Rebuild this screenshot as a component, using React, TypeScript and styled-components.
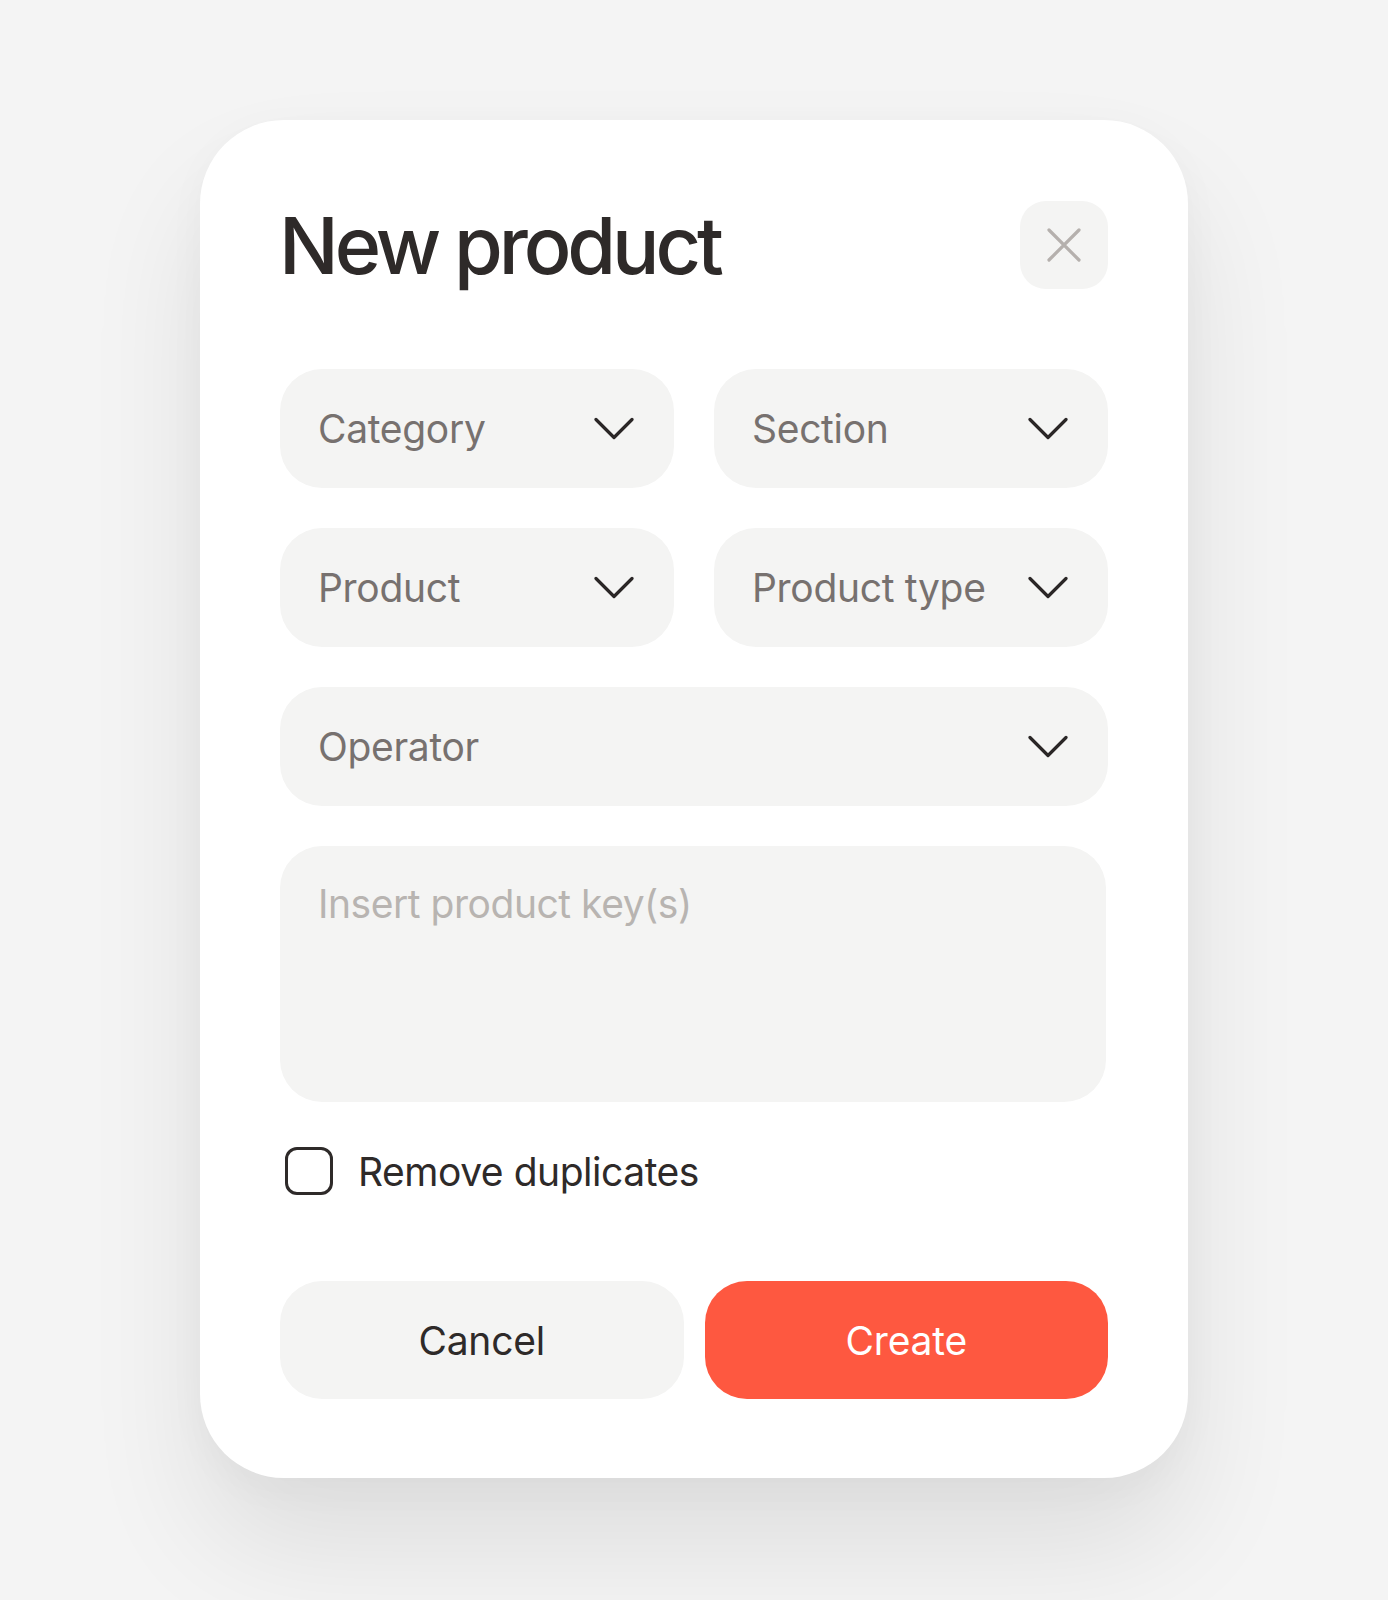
import React from "react"
import styled, { createGlobalStyle } from "styled-components"

const GlobalStyle = createGlobalStyle`
  html, body {
    margin: 0;
    padding: 0;
    background: #f4f4f4;
  }
  body {
    font-family: Inter, "Noto Sans", sans-serif;
  }
`

const Page = styled.div`
  display: flex;
  justify-content: center;
  padding: 120px 0 122px;
  min-height: 1600px;
  box-sizing: border-box;
`

const Card = styled.div`
  width: 988px;
  height: 1358px;
  box-sizing: border-box;
  background: #ffffff;
  border-radius: 84px;
  padding: 81px 80px 79px;
  display: flex;
  flex-direction: column;
  box-shadow: 0 70px 120px rgba(0, 0, 0, 0.09), 0 10px 40px rgba(0, 0, 0, 0.03);
`

const Header = styled.div`
  display: flex;
  align-items: center;
  justify-content: space-between;
  height: 88px;
  margin-bottom: 80px;
`

const Title = styled.h1`
  margin: 0 0 0 -1px;
  font-size: 79px;
  font-weight: 500;
  letter-spacing: -0.052em;
  color: #2e2a29;
  line-height: 1;
`

const CloseButton = styled.button`
  width: 88px;
  height: 88px;
  border: none;
  border-radius: 26px;
  background: #f4f4f3;
  display: flex;
  align-items: center;
  justify-content: center;
  padding: 0;
  cursor: pointer;
`

const Fields = styled.div`
  display: grid;
  grid-template-columns: 1fr 1fr;
  column-gap: 40px;
  row-gap: 40px;
`

const SelectBox = styled.div<{ $wide?: boolean }>`
  grid-column: ${({ $wide }) => ($wide ? "1 / span 2" : "auto")};
  height: 119px;
  box-sizing: border-box;
  background: #f4f4f3;
  border-radius: 42px;
  padding: 0 40px 0 38px;
  display: flex;
  align-items: center;
  justify-content: space-between;
`

const SelectLabel = styled.span`
  font-size: 39px;
  letter-spacing: -0.008em;
  color: #77716f;
`

const TextArea = styled.div`
  grid-column: 1 / span 2;
  height: 256px;
  box-sizing: border-box;
  margin-right: 2px;
  background: #f4f4f3;
  border-radius: 42px;
  padding: 34px 40px 34px 38px;
`

const Placeholder = styled.span`
  font-size: 39px;
  line-height: 48px;
  letter-spacing: -0.012em;
  color: #b8b4b1;
`

const CheckRow = styled.label`
  display: flex;
  align-items: center;
  gap: 25px;
  margin: 45px 0 0 5px;
  height: 48px;
`

const CheckBox = styled.span`
  width: 48px;
  height: 48px;
  box-sizing: border-box;
  border: 3.5px solid #2e2a29;
  border-radius: 12px;
`

const CheckLabel = styled.span`
  font-size: 39px;
  letter-spacing: -0.012em;
  color: #2e2a29;
`

const Actions = styled.div`
  display: grid;
  grid-template-columns: 1fr 1fr;
  gap: 21px;
  margin-top: 86px;
`

const ActionButton = styled.button<{ $primary?: boolean }>`
  height: 118px;
  border: none;
  border-radius: 42px;
  font-family: Inter, "Noto Sans", sans-serif;
  font-size: 39px;
  letter-spacing: -0.005em;
  background: ${({ $primary }) => ($primary ? "#fe5840" : "#f4f4f3")};
  color: ${({ $primary }) => ($primary ? "#ffffff" : "#2e2a29")};
  cursor: pointer;
`

const Chevron = () => (
  <svg width="40" height="24" viewBox="0 0 40 24" fill="none">
    <path d="M2 2.5 L20 20.5 L38 2.5" stroke="#2a2626" strokeWidth="3.2" strokeLinecap="round" strokeLinejoin="round" />
  </svg>
)

const CloseIcon = () => (
  <svg width="36" height="36" viewBox="0 0 36 36" fill="none">
    <path d="M3 3 L33 33 M33 3 L3 33" stroke="#b5b0ad" strokeWidth="3.2" strokeLinecap="round" />
  </svg>
)

const Select: React.FC<{ label: string; wide?: boolean }> = ({ label, wide }) => (
  <SelectBox $wide={wide}>
    <SelectLabel>{label}</SelectLabel>
    <Chevron />
  </SelectBox>
)

export default function App() {
  return (
    <>
      <GlobalStyle />
      <Page>
        <Card>
          <Header>
            <Title>New product</Title>
            <CloseButton aria-label="Close">
              <CloseIcon />
            </CloseButton>
          </Header>
          <Fields>
            <Select label="Category" />
            <Select label="Section" />
            <Select label="Product" />
            <Select label="Product type" />
            <Select label="Operator" wide />
            <TextArea>
              <Placeholder>Insert product key(s)</Placeholder>
            </TextArea>
          </Fields>
          <CheckRow>
            <CheckBox />
            <CheckLabel>Remove duplicates</CheckLabel>
          </CheckRow>
          <Actions>
            <ActionButton>Cancel</ActionButton>
            <ActionButton $primary>Create</ActionButton>
          </Actions>
        </Card>
      </Page>
    </>
  )
}
